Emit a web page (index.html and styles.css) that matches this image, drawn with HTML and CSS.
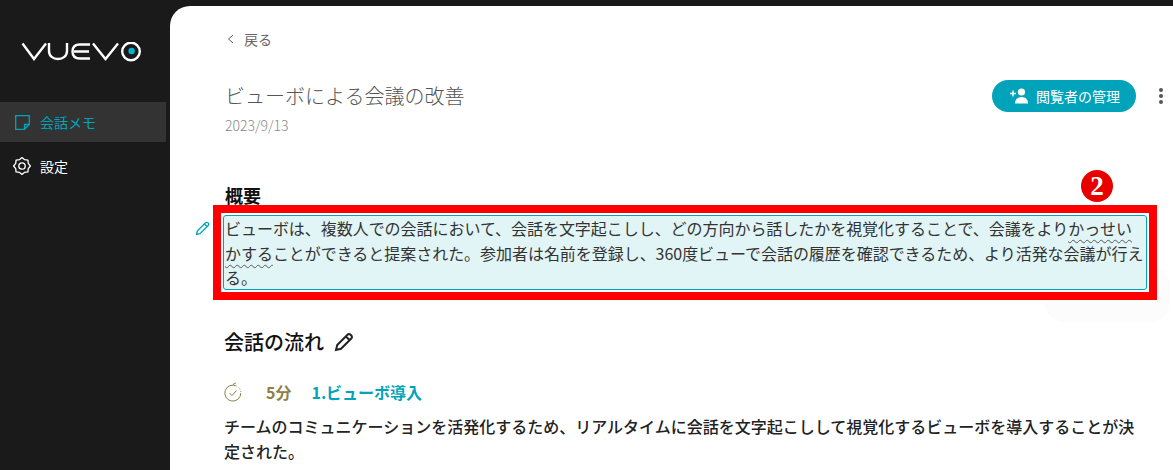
FILE: index.html
```html
<!DOCTYPE html>
<html lang="ja">
<head>
<meta charset="utf-8">
<title>VUEVO</title>
<link rel="stylesheet" href="styles.css">
</head>
<body>
<div class="app">
  <aside class="sidebar">
    <div class="logo">
      <svg width="122" height="20" viewBox="0 0 122 20" fill="none" stroke="#fff" stroke-width="2.4">
        <path d="M1.5 1.5 L13 17 L25 1.5"/>
        <path d="M28 1 V9 C28 14 32 17 37 17 C42 17 46 14 46 9 V1"/>
        <path d="M69 2.5 H59 C54 2.5 51.5 5 51.5 9.5 C51.5 14 54 16.5 59 16.5 H69 M53 9.5 H68"/>
        <path d="M72 1.5 L84.5 17 L97 1.5"/>
        <circle cx="110" cy="9.5" r="8.8"/>
        <circle cx="110.6" cy="9" r="3.2" fill="#00b4d4" stroke="none"/>
      </svg>
    </div>
    <nav class="nav">
      <a class="nav-item active">
        <svg class="nav-icon" width="15" height="15" viewBox="0 0 15 15" fill="none" stroke="#00a3ba" stroke-width="1.3">
          <path d="M0.7 0.7 H14.3 V9.5 L9.5 14.3 H0.7 Z M14.3 9.5 H9.5 V14.3"/>
        </svg>
        <span>会話メモ</span>
      </a>
      <a class="nav-item">
        <svg class="nav-icon gear" width="18" height="18" viewBox="0 0 18 18" fill="none" stroke="#fff" stroke-width="1.3" stroke-linejoin="round">
          <path d="M17.4 9 L15.28 11.6 L14.94 14.94 L11.6 15.28 L9 17.4 L6.4 15.28 L3.06 14.94 L2.72 11.6 L0.6 9 L2.72 6.4 L3.06 3.06 L6.4 2.72 L9 0.6 L11.6 2.72 L14.94 3.06 L15.28 6.4 Z"/>
          <circle cx="9" cy="9" r="3.2"/>
        </svg>
        <span>設定</span>
      </a>
    </nav>
  </aside>
  <main class="main">
    <a class="back">
      <svg width="7" height="10" viewBox="0 0 7 10" fill="none" stroke="#555" stroke-width="1"><path d="M6 1 L1.5 5 L6 9"/></svg>
      <span>戻る</span>
    </a>
    <header class="head">
      <div class="head-text">
        <h1 class="title">ビューボによる会議の改善</h1>
        <div class="date">2023/9/13</div>
      </div>
      <div class="head-actions">
        <button class="manage">
          <svg width="18" height="16" viewBox="0 0 18 16" fill="#fff">
            <path d="M3 2.5 V8.5 M0 5.5 H6" stroke="#fff" stroke-width="1.4"/>
            <circle cx="11.5" cy="4" r="3.6"/>
            <path d="M5 15.5 C5 11 8 9 11.5 9 C15 9 18 11 18 15.5 Z"/>
          </svg>
          <span>閲覧者の管理</span>
        </button>
        <span class="kebab"><i></i><i></i><i></i></span>
      </div>
    </header>
    <section class="summary">
      <h2 class="h2">概要</h2>
      <div class="summary-row">
        <div class="ghost"></div>
        <svg class="edit-mark" width="15" height="15" viewBox="0 0 15 15" fill="none" stroke="#00a3ba" stroke-width="1.3">
          <path d="M1.5 13.5 L2.3 10 L10.5 1.8 C11.2 1.1 12.2 1.1 12.9 1.8 L13.2 2.1 C13.9 2.8 13.9 3.8 13.2 4.5 L5 12.7 Z M9.5 3 L12 5.5"/>
        </svg>
        <div class="summary-box">ビューボは、複数人での会話において、会話を文字起こしし、どの方向から話したかを視覚化することで、会議をより<span class="wavy">かっせいかする</span>ことができると提案された。参加者は名前を登録し、360度ビューで会話の履歴を確認できるため、より活発な会議が行える。</div>
        <div class="red-frame"></div>
        <div class="badge">2</div>
      </div>
    </section>
    <section class="flow">
      <h2 class="flow-title">会話の流れ
        <svg width="20" height="20" viewBox="0 0 20 20" fill="none" stroke="#222" stroke-width="2">
          <path d="M2 18 L3.2 13 L13.5 2.7 C14.4 1.8 15.6 1.8 16.5 2.7 L17.3 3.5 C18.2 4.4 18.2 5.6 17.3 6.5 L7 16.8 Z M12 4.5 L15.5 8"/>
        </svg>
      </h2>
      <div class="topic">
        <svg class="timer" width="18" height="20" viewBox="0 0 18 20" fill="none" stroke="#8d8148" stroke-width="1">
          <path d="M12.5 4 A8 8 0 1 0 16.8 11"/>
          <path d="M17 10 A8 8 0 0 0 14 5" stroke-dasharray="1 1.6"/>
          <path d="M5.5 11 L8 13.5 L12.5 8.5"/>
          <path d="M9 2.5 L12 0.8"/>
        </svg>
        <span class="mins">5分</span>
        <span class="topic-name">1.ビューボ導入</span>
      </div>
      <p class="topic-body">チームのコミュニケーションを活発化するため、リアルタイムに会話を文字起こしして視覚化するビューボを導入することが決定された。</p>
    </section>
  </main>
</div>
</body>
</html>
```
FILE: styles.css
```css
* { box-sizing: border-box; }
html, body { margin: 0; height: 100%; overflow: hidden; }
body {
  background: #1a1a1a;
  font-family: "Noto Sans CJK JP", "Noto Sans", sans-serif;
  color: #222;
}
.app { display: flex; height: 470px; padding-top: 6px; }
.sidebar { width: 170px; flex: none; color: #fff; }
.logo { height: 96px; padding: 36px 0 0 21px; }
.logo svg { display: block; }
.nav { display: flex; flex-direction: column; gap: 4px; width: 166px; }
.nav-item {
  height: 40px;
  display: flex;
  align-items: center;
  gap: 10px;
  padding-left: 15px;
  font-size: 14px;
  font-weight: 400;
  color: #fff;
}
.nav-item.active { background: #333; color: #00a3ba; }
.nav-item .gear { margin-left: -2px; margin-right: -1px; }
.main {
  flex: 1;
  min-width: 0;
  background: #fff;
  border-radius: 20px 0 0 0;
  padding: 23px 0 0 55px;
  overflow: hidden;
}
.back {
  display: flex;
  align-items: center;
  gap: 10px;
  height: 20px;
  padding-left: 2px;
  font-size: 14px;
  color: #666;
}
.head {
  display: flex;
  justify-content: space-between;
  align-items: flex-start;
  margin-top: 31px;
  padding-right: 7px;
}
.title {
  margin: 0;
  font-size: 20px;
  line-height: 32px;
  font-weight: 300;
  color: #555;
}
.date { margin-top: 3px; margin-bottom: 1px; font-size: 14px; line-height: 20px; color: #888; font-weight: 300; }
.head-actions { display: flex; align-items: center; gap: 20px; }
.manage {
  display: flex;
  align-items: center;
  gap: 8px;
  height: 32px;
  width: 144px;
  padding: 0 0 0 18px;
  border: 0;
  border-radius: 16px;
  background: #00a3ba;
  color: #fff;
  font: 400 14px "Noto Sans CJK JP", sans-serif;
}
.kebab { display: flex; flex-direction: column; gap: 2px; width: 10px; align-items: center; }
.kebab i { width: 4px; height: 4px; border-radius: 50%; background: #555; }
.h2 { margin: 0; font-size: 18px; line-height: 28px; font-weight: 700; color: #111; }
.summary { margin-top: 45px; }
.summary-row { position: relative; z-index: 0; margin: 6px 26px 0 -2px; }
.summary-box {
  height: 75px;
  padding: 0 0 0 1px;
  border: 1px solid #00a3ba;
  border-radius: 3px;
  background: #e2f5f6;
  font-size: 16px;
  line-height: 24.5px;
  letter-spacing: -0.04px;
  color: #333;
}
.wavy { text-decoration: underline wavy #555 1px; text-underline-offset: 4px; }
.edit-mark { position: absolute; left: -28px; top: 6px; }
.ghost {
  position: absolute;
  z-index: -1;
  right: -23px;
  top: 50px;
  width: 125px;
  height: 57px;
  border-radius: 20px;
  background: #fcfcfc;
}
.red-frame {
  position: absolute;
  left: -10px;
  right: -10px;
  top: -10px;
  bottom: -10px;
  border: 8px solid #f00;
  pointer-events: none;
}
.badge {
  position: absolute;
  right: 34px;
  top: -45px;
  width: 32px;
  height: 32px;
  border-radius: 50%;
  background: #e80000;
  color: #fff;
  text-align: center;
  font: 700 27px/32px "Liberation Serif", serif;
}
.flow { margin-top: 38px; margin-left: -1px; }
.flow-title {
  display: flex;
  align-items: center;
  gap: 10px;
  margin: 0;
  font-size: 20px;
  line-height: 28px;
  font-weight: 500;
  color: #111;
}
.topic { display: flex; align-items: center; margin-top: 24px; height: 24px; font-size: 16px; font-weight: 700; }
.timer { margin-right: 24px; }
.mins { color: #8d8148; margin-right: 20px; }
.topic-name { color: #00a3ba; }
.topic-body {
  margin: 10px 28px 0 0;
  font-size: 16px;
  line-height: 25px;
  font-weight: 500;
  color: #222;
}
```
